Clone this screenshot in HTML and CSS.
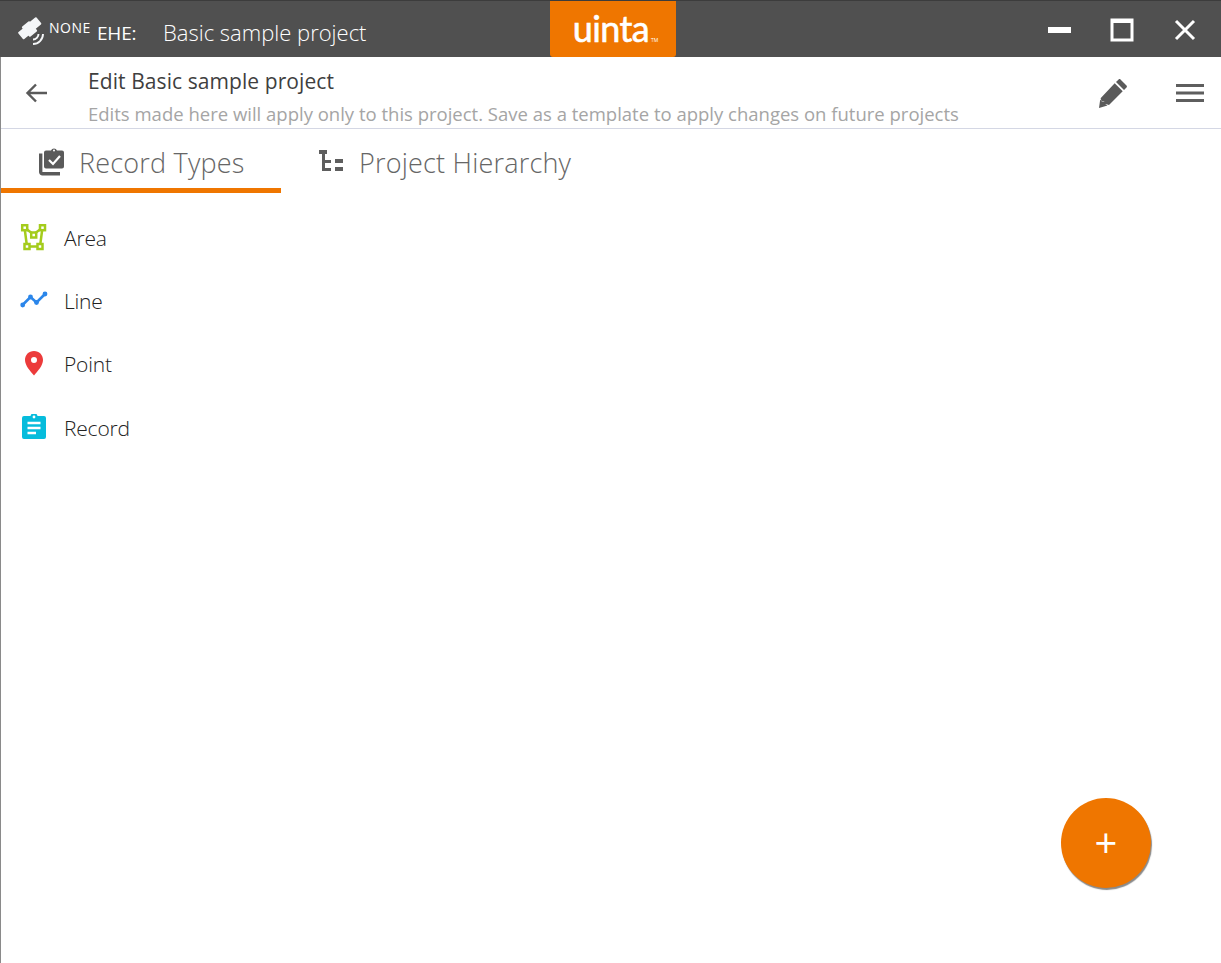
FILE: index.html
```html
<!DOCTYPE html>
<html lang="en">
<head>
<meta charset="utf-8">
<title>Edit Basic sample project</title>
<link rel="stylesheet" href="styles.css">
</head>
<body>
<div class="window">
  <header class="titlebar">
    <div class="title-left">
      <svg class="sat" viewBox="0 0 32 32" width="32" height="32"><g fill="#f4f6f8"><rect x="1.500" y="14.500" width="10" height="9" rx="1" transform="rotate(-40 6.500 19)"/><rect x="12" y="5" width="10" height="9" rx="1" transform="rotate(-40 17 9.500)"/><rect x="6.500" y="8.500" width="10" height="13" rx="1" transform="rotate(-40 11.500 15)"/></g><path d="M15 25.500A5.500 5.500 0 0 0 20.500 20M15 30A10 10 0 0 0 25 20" fill="none" stroke="#f4f6f8" stroke-width="1.900"/></svg>
      <span class="none">NONE</span>
      <span class="ehe">EHE:</span>
      <span class="project">Basic sample project</span>
    </div>
    <div class="logo"><span class="logo-text">uinta</span><span class="tm">TM</span></div>
    <div class="win-controls">
      <svg viewBox="0 0 24 24" width="24" height="24"><rect x="1" y="9" width="23" height="6" fill="#fff"/></svg>
      <svg viewBox="0 0 24 24" width="24" height="24"><rect x="2" y="2" width="20" height="20" fill="none" stroke="#fff" stroke-width="3"/><rect x="1" y="1" width="22" height="4" fill="#fff"/></svg>
      <svg viewBox="0 0 24 24" width="24" height="24"><path d="M3 3l18 18M21 3L3 21" stroke="#fff" stroke-width="3" fill="none"/></svg>
    </div>
  </header>
  <section class="subheader">
    <svg class="back" viewBox="0 0 24 24" width="24" height="24"><path d="M23 12H3M12 3.500L3.500 12l8.500 8.500" fill="none" stroke="#5a5a5a" stroke-width="2.400"/></svg>
    <div class="sub-text">
      <div class="sub-title">Edit Basic sample project</div>
      <div class="sub-note">Edits made here will apply only to this project. Save as a template to apply changes on future projects</div>
    </div>
    <div class="sub-actions">
      <svg viewBox="0 0 30 30" width="30" height="30"><path d="M22.500 1.500l6 6c.6.6.6 1.300 0 1.900l-2.500 2.500-8-8 2.600-2.400c.6-.6 1.300-.6 1.900 0zM16.700 5.200l8 8L11 27l-4.200-1.200-.6-2.600-2.700-.3-.9-2.700L16.700 5.200zM2.200 21.500l1.700 1.900 3 .4.600 2.500 2 1.200L1 30z" fill="#5a5a5a"/></svg>
      <svg class="menu" viewBox="0 0 28 20" width="28" height="20"><path d="M0 2.500h28M0 10h28M0 17.500h28" stroke="#5e5e5e" stroke-width="3"/></svg>
    </div>
  </section>
  <nav class="tabs">
    <div class="tab tab-active">
      <svg viewBox="0 0 28 34" width="28" height="34"><path d="M2.700 11.500V30a1.700 1.700 0 0 0 1.700 1.700H22" fill="none" stroke="#5a5a5a" stroke-width="3.400"/><path d="M8 8.500h5a3.200 3.200 0 0 1 6 0h5a2 2 0 0 1 2 2v14a2 2 0 0 1-2 2H8a2 2 0 0 1-2-2v-14a2 2 0 0 1 2-2z" fill="#5a5a5a"/><path d="M11 18l4 4 7-8" fill="none" stroke="#fff" stroke-width="2.200"/><circle cx="16" cy="8.500" r="1" fill="#fff"/></svg>
      <span class="tab-label">Record Types</span>
    </div>
    <div class="tab">
      <svg class="tree" viewBox="0 0 26 26" width="26" height="26"><g fill="#5e5e5e"><rect x="1" y="2" width="8" height="4"/><rect x="4" y="6" width="3" height="16"/><rect x="4" y="12" width="9" height="3"/><rect x="4" y="20" width="9" height="3"/><rect x="17" y="11" width="8" height="4"/><rect x="17" y="19" width="8" height="4"/></g></svg>
      <span class="tab-label">Project Hierarchy</span>
    </div>
  </nav>
  <ul class="types">
    <li class="type">
      <svg viewBox="0 1 28 28" width="28" height="28"><path d="M4.500 4.500l9 7 9-7-2.500 19H7z" fill="none" stroke="#a4cc1c" stroke-width="2.500"/><g fill="#fff" stroke="#a4cc1c" stroke-width="2.500"><rect x="2.200" y="2.200" width="5" height="5"/><rect x="20" y="2.200" width="5" height="5"/><rect x="11.200" y="9.500" width="5" height="5"/><rect x="4.500" y="21" width="5" height="5"/><rect x="17.500" y="21" width="5" height="5"/></g></svg>
      <span>Area</span>
    </li>
    <li class="type">
      <svg viewBox="0 2 28 28" width="28" height="28"><path d="M2.500 20l8-8 6 5.500 9-9" fill="none" stroke="#2b86ea" stroke-width="2.600"/><g fill="#2b86ea"><circle cx="2.700" cy="20" r="2.400"/><circle cx="10.500" cy="12" r="2.400"/><circle cx="16.500" cy="17.500" r="2.400"/><circle cx="25" cy="9" r="2.400"/></g></svg>
      <span>Line</span>
    </li>
    <li class="type">
      <svg viewBox="0 1 28 28" width="28" height="28"><path fill-rule="evenodd" d="M14 2c5.200 0 9 3.900 9 9 0 5.500-5.200 11-9 15.500C10.200 22 5 16.500 5 11c0-5.100 3.800-9 9-9zm0 6a3 3 0 1 0 0 6 3 3 0 0 0 0-6z" fill="#ec3b3b"/></svg>
      <span>Point</span>
    </li>
    <li class="type">
      <svg viewBox="0 2 28 28" width="28" height="28"><path d="M4 4h6.500a3.600 3.600 0 0 1 7 0H24a2 2 0 0 1 2 2v19a2 2 0 0 1-2 2H4a2 2 0 0 1-2-2V6a2 2 0 0 1 2-2z" fill="#06bcdc"/><path d="M7.500 11h13M7.500 16h13M7.500 21h8.500" stroke="#fff" stroke-width="2.400"/><circle cx="14" cy="5" r="1.400" fill="#fff"/></svg>
      <span>Record</span>
    </li>
  </ul>
  <button class="fab" type="button">+</button>
</div>
</body>
</html>
```
FILE: styles.css
```css
* { box-sizing: border-box; }
html, body { margin: 0; height: 100%; }
body { background: #fff; font-family: "Open Sans", "Noto Sans", sans-serif; overflow: hidden; }
.window { position: relative; height: 963px; border-left: 1px solid #8a8a8a; display: flex; flex-direction: column; }

.titlebar { height: 57px; flex: none; background: #505050; border-top: 1px solid #3c3c3c; display: grid; grid-template-columns: 550px 126px 1fr; color: #fff; margin-left: -1px; }
.title-left { display: flex; align-items: center; padding-left: 18px; }
.sat { flex: none; margin-top: 2px; margin-right: -1px; }
.none { font-size: 14px; font-weight: 500; margin: -3px 0 0 0; width: 48px; letter-spacing: .5px; }
.ehe { font-size: 19px; font-weight: 400; color: #fff; margin-top: 7px; letter-spacing: -.2px; width: 66px; }
.project { font-size: 22px; font-weight: 300; margin-top: 5px; }
.logo { background: #ef7600; display: flex; align-items: flex-start; justify-content: center; border-radius: 0 0 3px 3px; padding: 7px 0 0 5px; }
.logo-text { font-family: "Lato", sans-serif; font-size: 36px; font-weight: 400; line-height: 40px; letter-spacing: -.6px; -webkit-text-stroke: .6px #fff; }
.tm { font-size: 5px; align-self: flex-start; margin: 29px 0 0 2px; }
.win-controls { display: flex; justify-content: flex-end; align-items: center; gap: 39px; padding: 2px 24px 0 0; }

.subheader { height: 72px; flex: none; display: flex; align-items: flex-start; border-bottom: 1px solid #d4d7e4; }
.back { margin: 24px 0 0 23px; flex: none; }
.sub-text { margin-left: 40px; padding-top: 9px; flex: 1; }
.sub-title { font-size: 21px; line-height: 30px; color: #3f3f3f; letter-spacing: .08px; }
.sub-note { font-size: 18.500px; line-height: 26px; margin-top: 5px; color: #a5a5a5; white-space: nowrap; }
.sub-actions { display: flex; align-items: center; gap: 48px; padding: 21px 17px 0 0; }
.sub-actions svg { flex: none; }

.tabs { display: flex; height: 65px; flex: none; }
.tab { width: 280px; height: 64px; display: flex; align-items: center; padding: 0 0 4px 37px; gap: 13px; color: #666; font-size: 27px; font-weight: 300; letter-spacing: .2px; }
.tab-active { border-bottom: 5px solid #ef7600; padding-bottom: 0; }
.tab + .tab { gap: 15px; width: 320px; }
.tab-label { padding-top: 7px; }
.tree { margin-top: 4px; }

.types { list-style: none; margin: 12px 0 0; padding: 0; }
.type { display: flex; align-items: center; height: 63.300px; padding-left: 19px; gap: 16px; font-size: 21px; font-weight: 300; color: #222; letter-spacing: -.2px; }
.type svg { flex: none; }

.fab { position: absolute; left: 1060px; top: 798px; width: 90px; height: 90px; border: 0; border-radius: 50%; background: #ef7600; color: #fff; font-family: "Open Sans", sans-serif; font-size: 40px; font-weight: 400; line-height: 1; padding: 0; box-shadow: 1px 2px 1px #8a8a8a; }
```
